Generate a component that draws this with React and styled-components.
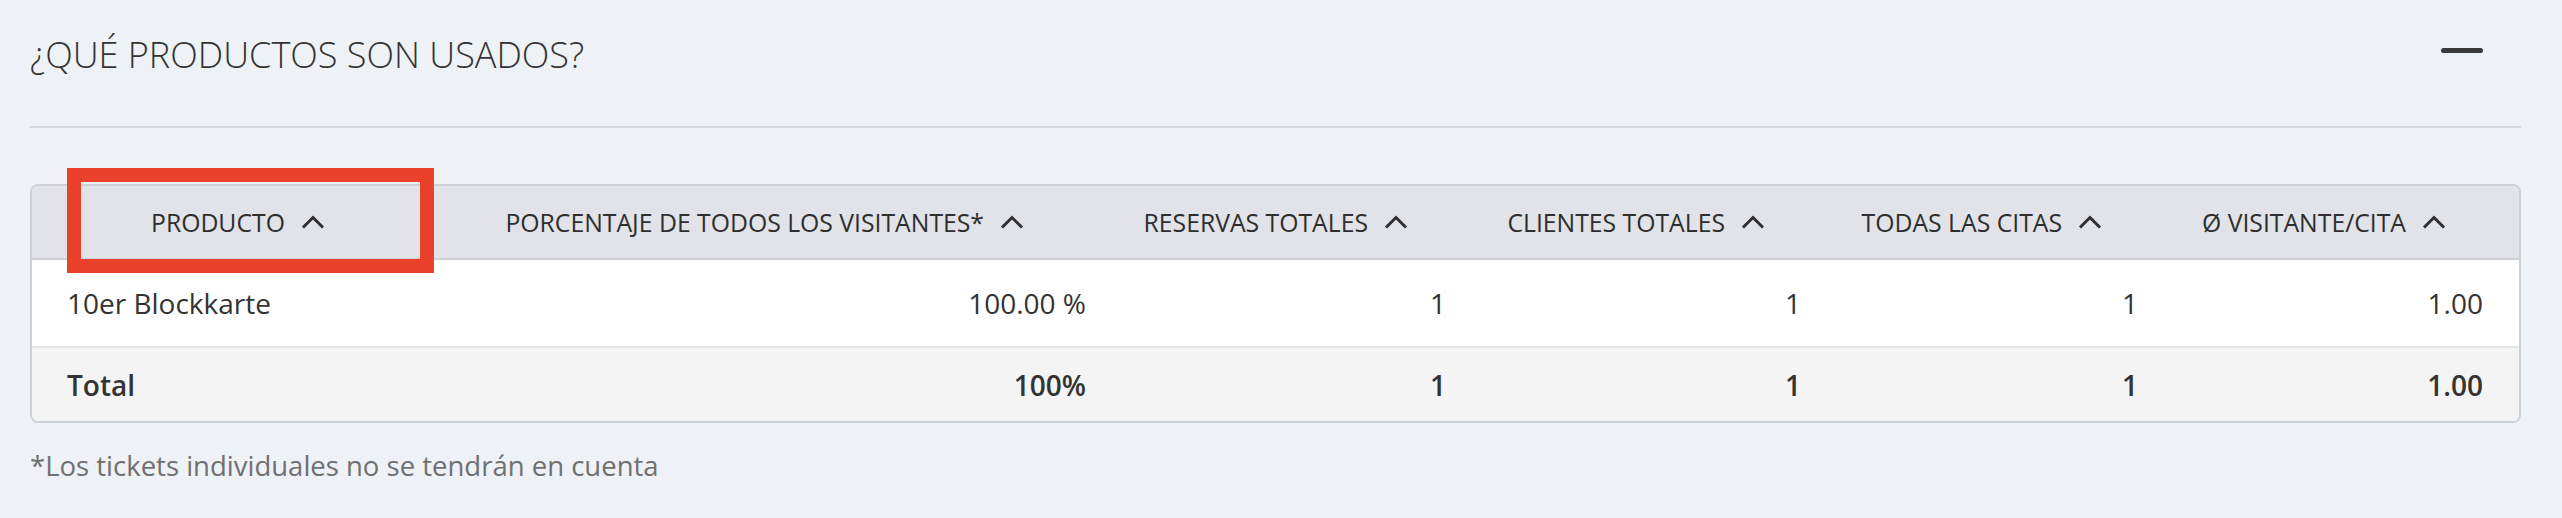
import React from 'react';
import styled, { createGlobalStyle } from 'styled-components';

const GlobalStyle = createGlobalStyle`
	html, body {
		margin: 0;
		padding: 0;
		background: #eef1f6;
	}

	body {
		font-family: "Open Sans", "Liberation Sans", sans-serif;
		color: #333333;
	}
`;

const COLUMNS = '437px 653px 360px 355px 337px 1fr';

const Page = styled.div`
	padding: 0 41px 40px 30px;
`;

const TitleBar = styled.div`
	display: flex;
	justify-content: space-between;
	align-items: flex-start;
	height: 128px;
	padding-top: 31px;
	box-sizing: border-box;
	border-bottom: 2px solid #d6d9de;
`;

const Title = styled.h2`
	margin: 0;
	font-size: 36px;
	line-height: 48px;
	font-weight: 300;
	color: #333333;
`;

const CollapseButton = styled.button`
	display: flex;
	align-items: center;
	justify-content: center;
	margin: 17px 38px 0 0;
	padding: 0;
	border: none;
	background: none;
	cursor: pointer;

	&:focus {
		outline: none;
	}
`;

const MinusBar = styled.span`
	display: block;
	width: 42px;
	height: 5px;
	border-radius: 3px;
	background: #3a3a3a;
`;

const Table = styled.div`
	margin-top: 56px;
	border: 2px solid #cdd0d5;
	border-radius: 8px;
	background: #ffffff;
`;

const Row = styled.div`
	display: grid;
	grid-template-columns: ${COLUMNS};
	align-items: center;
`;

const HeadRow = styled(Row)`
	height: 72px;
	background: #e1e3e8;
	border-bottom: 2px solid #cdd0d5;
	border-radius: 6px 6px 0 0;
`;

const BodyRow = styled(Row)`
	height: 86px;
	background: #ffffff;
	border-bottom: 2px solid #e5e6e8;
`;

const TotalRow = styled(Row)`
	height: 73px;
	background: #f4f4f4;
	border-radius: 0 0 6px 6px;
	font-weight: 600;
`;

const HeadCell = styled.div`
	position: relative;
	display: flex;
	align-items: center;
	justify-content: ${p => (p.$first ? 'flex-start' : 'flex-end')};
	height: 100%;
	padding: ${p => (p.$first ? '0 0 0 119px' : `0 ${p.$pr || 73}px 0 0`)};
	box-sizing: border-box;
	font-size: 24.75px;
	font-weight: 500;
	color: #2e2e2e;
	white-space: nowrap;
`;

const Caret = styled.svg`
	margin-left: 16px;
	flex: none;
`;

const Highlight = styled.span`
	position: absolute;
	left: 35px;
	top: -18px;
	width: 367px;
	height: 105px;
	box-sizing: border-box;
	border: 14px solid #e9412a;
	pointer-events: none;
`;

const Cell = styled.div`
	padding: ${p => (p.$first ? '0 0 0 35px' : '0 36px 0 0')};
	text-align: ${p => (p.$first ? 'left' : 'right')};
	font-size: 28px;
	line-height: 36px;
	color: #333333;
	white-space: nowrap;
`;

const Footnote = styled.p`
	margin: 24px 0 0;
	font-size: 27.5px;
	line-height: 37px;
	color: #707070;
`;

const columns = [
	{ label: 'PRODUCTO' },
	{ label: 'PORCENTAJE DE TODOS LOS VISITANTES*', pr: 98 },
	{ label: 'RESERVAS TOTALES', pr: 74 },
	{ label: 'CLIENTES TOTALES', pr: 72 },
	{ label: 'TODAS LAS CITAS', pr: 72 },
	{ label: 'Ø VISITANTE/CITA', pr: 73 },
];

const rows = [['10er Blockkarte', '100.00 %', '1', '1', '1', '1.00']];
const totals = ['Total', '100%', '1', '1', '1', '1.00'];

function SortCaret() {
	return (
		<Caret width="24" height="14" viewBox="0 0 24 14">
			<polyline points="2,12.5 12,2.5 22,12.5" fill="none" stroke="#2f2f2f" strokeWidth="3" />
		</Caret>
	);
}

export default function App() {
	return (
		<Page>
			<GlobalStyle />
			<TitleBar>
				<Title>¿QUÉ PRODUCTOS SON USADOS?</Title>
				<CollapseButton type="button"><MinusBar /></CollapseButton>
			</TitleBar>

			<Table>
				<HeadRow>
					{columns.map((col, i) => (
						<HeadCell key={col.label} $first={i === 0} $pr={col.pr}>
							{col.label}
							<SortCaret />
							{i === 0 && <Highlight />}
						</HeadCell>
					))}
				</HeadRow>
				{rows.map((row, r) => (
					<BodyRow key={r}>
						{row.map((value, i) => <Cell key={i} $first={i === 0}>{value}</Cell>)}
					</BodyRow>
				))}
				<TotalRow>
					{totals.map((value, i) => <Cell key={i} $first={i === 0}>{value}</Cell>)}
				</TotalRow>
			</Table>

			<Footnote>*Los tickets individuales no se tendrán en cuenta</Footnote>
		</Page>
	);
}
